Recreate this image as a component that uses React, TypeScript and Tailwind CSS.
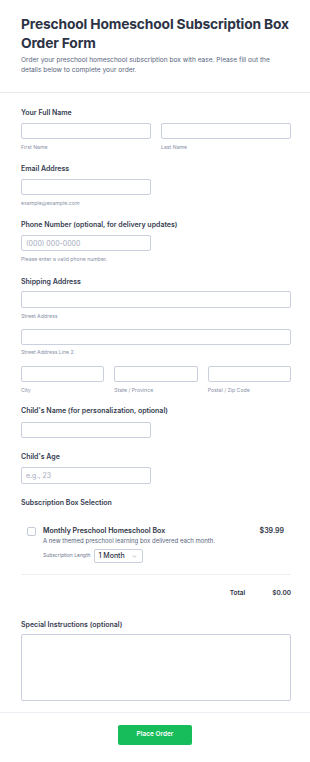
import { ChevronDown } from 'lucide-react';

const inputCls =
  'block h-[16px] w-full rounded-[2px] border border-[#c9cfdc] bg-white px-[4px] text-[7px] text-[#2c3345] placeholder:text-[#a4aabb] outline-none';

function Label({ children, className = '' }: { children: React.ReactNode; className?: string }) {
  return <div className={`text-[7px] font-semibold leading-[10px] text-[#343b4f] ${className}`}>{children}</div>;
}

function Sub({ children, className = '' }: { children: React.ReactNode; className?: string }) {
  return <div className={`text-[5.2px] leading-[8px] text-[#8a91a6] ${className}`}>{children}</div>;
}

export default function App() {
  return (
    <div className="min-h-[762px] w-[310px] bg-white font-['Inter',sans-serif] text-[#2c3345]">
      <header className="border-b border-[#e6e8ee] pb-[17px] pl-[21px] pr-[19px] pt-[15px]">
        <h1 className="text-[13.8px] font-bold leading-[19px] tracking-[-0.15px] text-[#2c3345]">
          Preschool Homeschool Subscription Box Order Form
        </h1>
        <p className="mt-[2px] text-[6.6px] leading-[10px] text-[#57647e]">
          Order your preschool homeschool subscription box with ease. Please fill out the details below to complete your
          order.
        </p>
      </header>

      <form className="pl-[21px] pr-[19px] pt-[15px]" onSubmit={(e) => e.preventDefault()}>
        <Label>Your Full Name</Label>
        <div className="mt-[5px] grid grid-cols-2 gap-[10px]">
          <div>
            <input className={inputCls} />
            <Sub className="mt-[4px]">First Name</Sub>
          </div>
          <div>
            <input className={inputCls} />
            <Sub className="mt-[4px]">Last Name</Sub>
          </div>
        </div>

        <Label className="mt-[13px]">Email Address</Label>
        <div className="mt-[5px] w-[130px]">
          <input className={inputCls} />
          <Sub className="mt-[4px]">example@example.com</Sub>
        </div>

        <Label className="mt-[13px]">Phone Number (optional, for delivery updates)</Label>
        <div className="mt-[5px] w-[130px]">
          <input className={inputCls} placeholder="(000) 000-0000" />
        </div>
        <Sub className="mt-[4px]">Please enter a valid phone number.</Sub>

        <Label className="mt-[14px]">Shipping Address</Label>
        <input className={`${inputCls} mt-[4px] !h-[17px]`} />
        <Sub className="mt-[4px]">Street Address</Sub>
        <input className={`${inputCls} mt-[9px]`} />
        <Sub className="mt-[3px]">Street Address Line 2</Sub>
        <div className="mt-[10px] grid grid-cols-3 gap-[10px]">
          <div>
            <input className={inputCls} />
            <Sub className="mt-[4px]">City</Sub>
          </div>
          <div>
            <input className={inputCls} />
            <Sub className="mt-[4px]">State / Province</Sub>
          </div>
          <div>
            <input className={inputCls} />
            <Sub className="mt-[4px]">Postal / Zip Code</Sub>
          </div>
        </div>

        <Label className="mt-[12px]">Child's Name (for personalization, optional)</Label>
        <div className="mt-[6px] w-[130px]">
          <input className={inputCls} />
        </div>

        <Label className="mt-[14px]">Child's Age</Label>
        <div className="mt-[5px] w-[130px]">
          <input className={`${inputCls} !h-[17px]`} placeholder="e.g., 23" />
        </div>

        <Label className="mt-[14px]">Subscription Box Selection</Label>

        <div className="mt-[18px] flex pl-[6px]">
          <span className="mt-[1px] h-[9px] w-[9px] shrink-0 rounded-[2px] border border-[#c3cad8] bg-white" />
          <div className="ml-[7px] flex-1">
            <div className="flex items-start justify-between">
              <div className="text-[7px] font-semibold leading-[10px] text-[#2c3345]">Monthly Preschool Homeschool Box</div>
              <div className="pr-[7px] text-[7px] font-semibold leading-[10px] text-[#2c3345]">$39.99</div>
            </div>
            <div className="text-[6px] leading-[10px] text-[#57647e]">A new themed preschool learning box delivered each month.</div>
            <div className="mt-[3px] flex items-center gap-[3px]">
              <span className="text-[5px] text-[#6f7890]">Subscription Length</span>
              <div className="flex h-[14px] w-[49px] items-center justify-between rounded-[2px] border border-[#c9cfdc] bg-white pl-[4px] pr-[5px]">
                <span className="text-[7px] font-medium text-[#2c3345]">1 Month</span>
                <ChevronDown className="h-[5px] w-[5px] text-[#6f7890]" strokeWidth={2.5} />
              </div>
            </div>
          </div>
        </div>

        <div className="mt-[11px] border-t border-[#eceef3]" />

        <div className="mt-[13px] flex justify-end text-[6.5px] font-semibold leading-[10px] text-[#2c3345]">
          <span>Total</span>
          <span className="ml-[27px]">$0.00</span>
        </div>

        <Label className="mt-[22px]">Special Instructions (optional)</Label>
        <textarea className="mt-[4px] block h-[67px] w-full resize-none rounded-[2px] border border-[#c9cfdc] bg-white outline-none" />
      </form>

      <div className="mt-[11px] flex justify-center border-t border-[#eceef3] pt-[12px]">
        <button
          type="button"
          className="h-[20px] w-[74px] rounded-[2px] bg-[#18bd5b] text-[6.5px] font-semibold text-white"
        >
          Place Order
        </button>
      </div>
    </div>
  );
}
